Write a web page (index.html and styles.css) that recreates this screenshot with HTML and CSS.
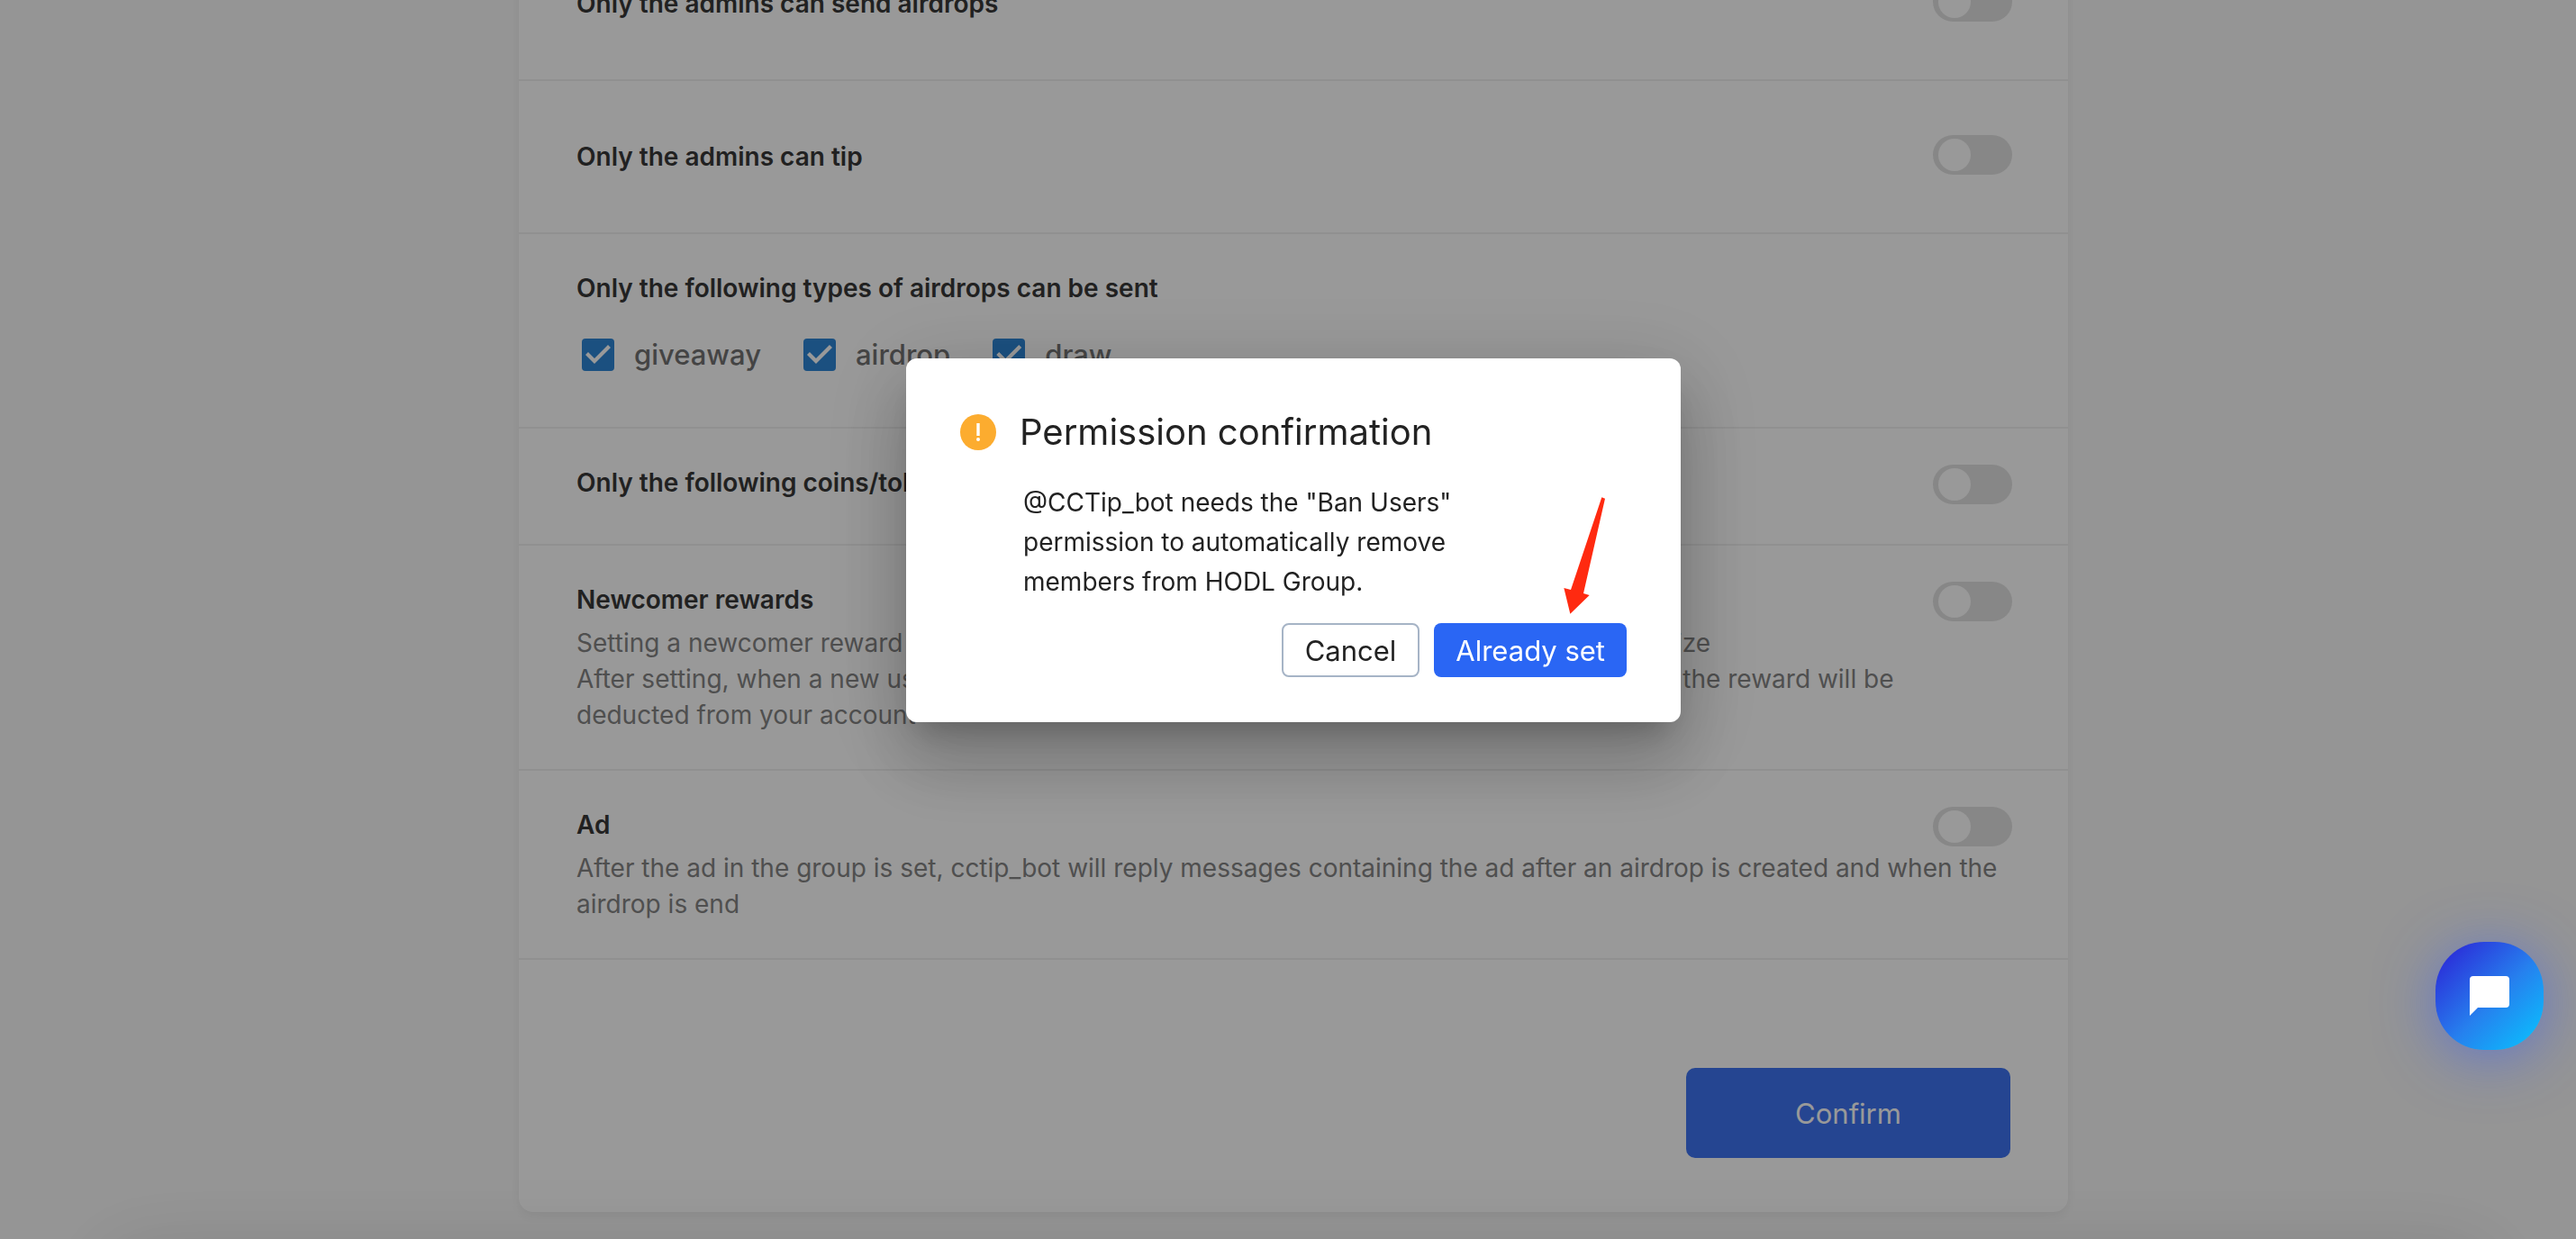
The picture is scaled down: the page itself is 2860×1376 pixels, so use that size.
FILE: index.html
```html
<!DOCTYPE html>
<html lang="en">
<head>
  <meta charset="utf-8">
  <meta name="viewport" content="width=device-width, initial-scale=1">
  <title>Group settings</title>
  <link rel="stylesheet" href="styles.css">
</head>
<body>
  <main class="page">
    <form class="card">
      <section class="row row--single">
        <label class="row__title" for="admin-airdrop">Only the admins can send airdrops</label>
        <input class="switch" type="checkbox" role="switch" id="admin-airdrop">
      </section>
      <section class="row row--single">
        <label class="row__title" for="admin-tip">Only the admins can tip</label>
        <input class="switch" type="checkbox" role="switch" id="admin-tip">
      </section>
      <section class="row">
        <div class="row__body">
          <h3 class="row__title">Only the following types of airdrops can be sent</h3>
          <div class="types">
            <label class="types__item"><input class="tick" type="checkbox" checked>giveaway</label>
            <label class="types__item"><input class="tick" type="checkbox" checked>airdrop</label>
            <label class="types__item"><input class="tick" type="checkbox" checked>draw</label>
          </div>
        </div>
      </section>
      <section class="row row--compact">
        <label class="row__title" for="coins">Only the following coins/tokens can be sent</label>
        <input class="switch" type="checkbox" role="switch" id="coins">
      </section>
      <section class="row">
        <div class="row__body">
          <label class="row__title" for="newcomer">Newcomer rewards</label>
          <p class="row__text">Setting a newcomer reward can draw more users to join the group and grow its community size<br>After setting, when a new user joins the group, the reward will be sent out automatically, and the reward will be deducted from your account</p>
        </div>
        <input class="switch" type="checkbox" role="switch" id="newcomer">
      </section>
      <section class="row">
        <div class="row__body">
          <label class="row__title" for="ad">Ad</label>
          <p class="row__text">After the ad in the group is set, cctip_bot will reply messages containing the ad after an airdrop is created and when the airdrop is end</p>
        </div>
        <input class="switch" type="checkbox" role="switch" id="ad">
      </section>
      <div class="card__footer">
        <button class="confirm" type="button">Confirm</button>
      </div>
    </form>
    <div class="page__panel"></div>
  </main>

  <div class="overlay">
    <div class="dialog" role="dialog" aria-modal="true" aria-labelledby="dialog-title">
      <header class="dialog__header">
        <svg class="dialog__icon" viewBox="0 0 40 40" aria-hidden="true">
          <circle cx="20" cy="20" r="20" fill="#fcac2f"/>
          <path d="M18.3 10h3.4v14h-3.4z" fill="#fff"/>
          <circle cx="20" cy="28" r="2" fill="#fff"/>
        </svg>
        <h2 class="dialog__title" id="dialog-title">Permission confirmation</h2>
      </header>
      <p class="dialog__text">@CCTip_bot needs the "Ban Users" permission to automatically remove members from HODL Group.</p>
      <div class="dialog__actions">
        <button class="btn btn--outline" type="button">Cancel</button>
        <button class="btn btn--primary" type="button">Already set</button>
      </div>
      <svg class="dialog__arrow" viewBox="0 0 240 450" aria-hidden="true">
        <path d="M175 37L186 41L114 357L134 363L70 425L49 339L72 345Z" fill="#ff2a10"/>
      </svg>
    </div>
  </div>

  <button class="chat" type="button" aria-label="Open chat">
    <svg class="chat__icon" viewBox="0 0 44 44" aria-hidden="true">
      <path d="M4 0H40Q44 0 44 4V31Q44 35 40 35H9L0 44V4Q0 0 4 0Z" fill="#fff"/>
    </svg>
  </button>
</body>
</html>
```
FILE: styles.css
```css
*,
*::before,
*::after {
  box-sizing: border-box;
}

body {
  margin: 0;
  height: 100vh;
  overflow: hidden;
  background: #f9f9f9;
  color: #222;
  font-family: Inter, "Noto Sans", sans-serif;
  font-size: 28px;
  line-height: 40px;
}

h2,
h3,
p {
  margin: 0;
}

button {
  font-family: inherit;
  cursor: pointer;
}

.page {
  margin-top: -80px;
  padding-left: 12px;
}

.card {
  max-width: 1720px;
  margin: 0 auto;
  background: #fff;
  border-radius: 16px;
  box-shadow: 0 4px 12px rgba(0, 0, 0, 0.06);
}

.row {
  display: flex;
  align-items: flex-start;
  justify-content: space-between;
  padding: 40px 62px 40px 64px;
  border-bottom: 2px solid #f0f0f0;
}

.row--single {
  padding-top: 60px;
  padding-bottom: 60px;
}

.row--single .row__title {
  line-height: 48px;
}

.row--compact {
  padding-bottom: 44px;
}

.row__body {
  flex: 1;
  display: flex;
  flex-direction: column;
  gap: 8px;
}

/* Descriptions run on below the switch. */
.row__body:has(+ .switch) {
  margin-right: -88px;
  padding-right: 10px;
}

.row__title {
  color: #383838;
  font-size: 28px;
  font-weight: 600;
  line-height: 40px;
}

.row__text {
  color: #848484;
}

.switch {
  flex: none;
  appearance: none;
  width: 88px;
  height: 44px;
  margin: 0;
  padding: 4px 6px;
  border-radius: 22px;
  background: #e2e2e2;
}

.switch::before {
  content: "";
  display: block;
  width: 36px;
  height: 36px;
  border-radius: 50%;
  background: #fff;
}

.switch:checked::before {
  margin-left: auto;
}

.types {
  display: flex;
  align-items: center;
  gap: 47px;
  padding: 12px 6px 6px;
}

.types__item {
  display: flex;
  align-items: center;
  gap: 22px;
  color: #727272;
  font-size: 31px;
  font-weight: 500;
  line-height: 68px;
}

.tick {
  appearance: none;
  width: 36px;
  height: 36px;
  margin: 0;
  border-radius: 4px;
  background: #2d86d6;
}

.tick:checked::before {
  content: "";
  display: block;
  width: 36px;
  height: 36px;
  background: #fff;
  clip-path: polygon(7px 15px, 4px 18px, 14px 28px, 32px 10px, 29px 7px, 14px 22px);
}

.card__footer {
  display: flex;
  justify-content: flex-end;
  padding: 120px 64px 60px;
}

.confirm {
  width: 360px;
  height: 100px;
  border: 0;
  border-radius: 10px;
  background: #3e74f2;
  color: #fff;
  font-size: 31px;
}

.page__panel {
  height: 80px;
  margin: 56px 110px 0 120px;
  position: relative;
  box-shadow: 0 0 92px 8px rgba(0, 0, 0, 0.14);
}

.overlay {
  position: fixed;
  inset: 0;
  display: flex;
  align-items: flex-start;
  justify-content: center;
  padding: 398px 0 0 12px;
  background: rgba(0, 0, 0, 0.4);
}

.dialog {
  position: relative;
  width: 860px;
  padding: 60px 60px 50px;
  border-radius: 12px;
  background: #fff;
  box-shadow:
    0 22px 30px -14px rgba(0, 0, 0, 0.2),
    0 48px 76px 6px rgba(0, 0, 0, 0.14),
    0 18px 92px 16px rgba(0, 0, 0, 0.12);
}

.dialog__header {
  display: flex;
  align-items: center;
  gap: 26px;
}

.dialog__icon {
  width: 40px;
  height: 40px;
}

.dialog__title {
  font-size: 40px;
  font-weight: 400;
  line-height: 44px;
}

.dialog__text {
  max-width: 580px;
  padding: 34px 0 24px 70px;
  line-height: 44px;
}

.dialog__actions {
  display: flex;
  justify-content: flex-end;
  gap: 16px;
}

.btn {
  height: 60px;
  padding: 0 24px;
  border: 0;
  border-radius: 8px;
  font-size: 31px;
}

.btn--outline {
  border: 2px solid #a6b4c6;
  background: #fff;
  color: #222;
}

.btn--primary {
  background: #2a66f4;
  color: #fff;
}

.dialog__arrow {
  position: absolute;
  top: 142px;
  right: 66px;
  width: 80px;
  height: 150px;
}

.chat {
  position: fixed;
  right: 36px;
  bottom: 210px;
  display: flex;
  align-items: center;
  justify-content: center;
  width: 120px;
  height: 120px;
  padding: 0;
  border: 0;
  border-radius: 54px;
  background: linear-gradient(135deg, #2b2bd8 8%, #2680ee 54%, #08c4ff 98%);
  box-shadow: 0 8px 64px rgba(47, 90, 255, 0.5);
}

.chat__icon {
  width: 44px;
  height: 44px;
}
```
